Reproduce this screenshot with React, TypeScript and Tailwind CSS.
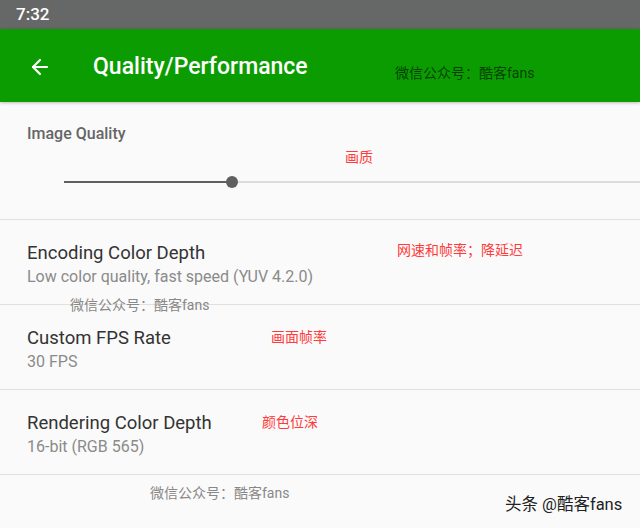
import { ArrowLeft } from 'lucide-react';

const font = { fontFamily: 'Roboto, "Noto Sans CJK SC", sans-serif' };

interface RowProps {
  title: string;
  subtitle: string;
  note: string;
  noteClass: string;
}

const SettingRow = ({ title, subtitle, note, noteClass }: RowProps) => (
  <div className="relative h-[85px] border-b border-[#e0e0e0] px-[27px] pt-[21px]">
    <div className="text-[18.5px] leading-[24px] text-[#333]">{title}</div>
    <div className="text-[16px] leading-[20px] text-[#8a8a8a] mt-[2px]">{subtitle}</div>
    <span className={`absolute text-[14px] leading-[16px] text-[#ff3b3b] ${noteClass}`}>{note}</span>
  </div>
);

const App = () => {
  return (
    <div className="relative w-[640px] h-[528px] overflow-hidden bg-[#fafafa]" style={font}>
      <div className="h-[29px] bg-[#666867] flex items-center pl-[16px]">
        <span className="text-white text-[17px] font-medium">7:32</span>
      </div>
      <div className="relative h-[73px] bg-[#0a9c00] flex items-center pt-[3px] shadow-[0_1px_3px_rgba(0,0,0,0.25)]">
        <ArrowLeft size={24} strokeWidth={2.2} className="text-white ml-[28px]" />
        <span className="text-white text-[23px] font-medium ml-[41px]">Quality/Performance</span>
        <span className="absolute left-[395px] top-[36px] text-[14px] leading-[16px] text-black/60">
          微信公众号：酷客fans
        </span>
      </div>

      <div className="relative h-[118px] border-b border-[#e0e0e0]">
        <div className="pl-[27px] pt-[22px] text-[16px] font-medium leading-[20px] text-[#666]">
          Image Quality
        </div>
        <span className="absolute left-[345px] top-[47px] text-[14px] leading-[16px] text-[#ff3b3b]">画质</span>
        <div className="absolute left-[64px] right-0 top-[74px] flex items-center">
          <div className="w-[168px] h-[2px] bg-[#5f5f5f]" />
          <div className="w-[12px] h-[12px] rounded-full bg-[#5f5f5f] -ml-[6px] -mr-[6px] z-10" />
          <div className="flex-1 h-[2px] bg-[#dcdcdc]" />
        </div>
      </div>

      <SettingRow
        title="Encoding Color Depth"
        subtitle="Low color quality, fast speed (YUV 4.2.0)"
        note="网速和帧率；降延迟"
        noteClass="left-[397px] top-[22px]"
      />
      <SettingRow
        title="Custom FPS Rate"
        subtitle="30 FPS"
        note="画面帧率"
        noteClass="left-[271px] top-[24px]"
      />
      <SettingRow
        title="Rendering Color Depth"
        subtitle="16-bit (RGB 565)"
        note="颜色位深"
        noteClass="left-[262px] top-[24px]"
      />

      <span className="absolute left-[70px] top-[297px] text-[14px] leading-[16px] text-[#888]">
        微信公众号：酷客fans
      </span>
      <span className="absolute left-[150px] top-[485px] text-[14px] leading-[16px] text-[#888]">
        微信公众号：酷客fans
      </span>
      <span className="absolute left-[505px] top-[496px] text-[16.5px] leading-[18px] text-[#222]">
        头条 @酷客fans
      </span>
    </div>
  );
};

export default App;
